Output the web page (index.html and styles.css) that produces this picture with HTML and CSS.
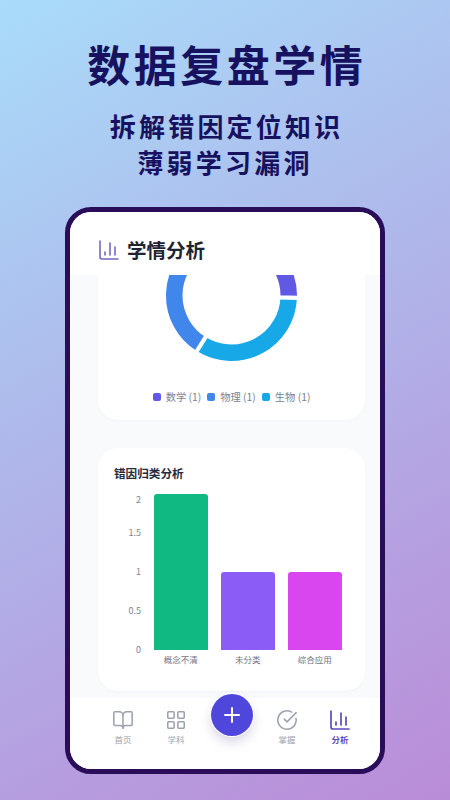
FILE: index.html
```html
<!DOCTYPE html>
<html lang="zh-CN">
<head>
<meta charset="utf-8">
<title>数据复盘学情</title>
<link rel="stylesheet" href="styles.css">
</head>
<body>
<main class="poster">
  <h1 class="headline">数据复盘学情</h1>
  <p class="subline">拆解错因定位知识<br>薄弱学习漏洞</p>
  <section class="phone">
    <header class="app-header">
      <svg class="header-icon" viewBox="0 0 24 24"><path d="M3 3v16a2 2 0 0 0 2 2h16"/><path d="M18 17V9"/><path d="M13 17V5"/><path d="M8 17v-3"/></svg>
      <h2 class="app-title">学情分析</h2>
    </header>
    <div class="content">
      <div class="card card-donut">
        <svg class="donut" viewBox="0 0 267 100">
          <g transform="rotate(2 133.5 20.5)">
            <path class="seg seg-cyan" d="M201 20.5A67.5 67.5 0 0 1 99.75 78.96L110 61.2A47 47 0 0 0 180.5 20.5Z"/>
            <path class="seg seg-blue" d="M99.75 78.96A67.5 67.5 0 0 1 99.75 -37.96L110 -20.2A47 47 0 0 0 110 61.2Z"/>
            <path class="seg seg-purple" d="M99.75 -37.96A67.5 67.5 0 0 1 201 20.5L180.5 20.5A47 47 0 0 0 110 -20.2Z"/>
          </g>
        </svg>
        <ul class="legend">
          <li class="legend-item"><i class="swatch swatch-purple"></i>数学 (1)</li>
          <li class="legend-item"><i class="swatch swatch-blue"></i>物理 (1)</li>
          <li class="legend-item"><i class="swatch swatch-cyan"></i>生物 (1)</li>
        </ul>
      </div>
      <div class="card card-bars">
        <h3 class="card-title">错因归类分析</h3>
        <div class="chart">
          <div class="y-axis">
            <span class="tick tick-first">2</span>
            <span class="tick">1.5</span>
            <span class="tick">1</span>
            <span class="tick">0.5</span>
            <span class="tick">0</span>
          </div>
          <div class="plot">
            <div class="bar-col"><div class="bar bar-green"></div><span class="bar-label">概念不清</span></div>
            <div class="bar-col"><div class="bar bar-violet"></div><span class="bar-label">未分类</span></div>
            <div class="bar-col"><div class="bar bar-magenta"></div><span class="bar-label">综合应用</span></div>
          </div>
        </div>
      </div>
    </div>
    <nav class="tabbar">
      <a class="tab">
        <svg class="tab-icon" viewBox="0 0 24 24"><path d="M12 7v14"/><path d="M3 18a1 1 0 0 1-1-1V4a1 1 0 0 1 1-1h5a4 4 0 0 1 4 4 4 4 0 0 1 4-4h5a1 1 0 0 1 1 1v13a1 1 0 0 1-1 1h-6a3 3 0 0 0-3 3 3 3 0 0 0-3-3z"/></svg>
        <span>首页</span>
      </a>
      <a class="tab">
        <svg class="tab-icon" viewBox="0 0 24 24"><rect x="3" y="3" width="7" height="7" rx="1"/><rect x="14" y="3" width="7" height="7" rx="1"/><rect x="14" y="14" width="7" height="7" rx="1"/><rect x="3" y="14" width="7" height="7" rx="1"/></svg>
        <span>学科</span>
      </a>
      <div class="tab-gap"></div>
      <a class="tab">
        <svg class="tab-icon" viewBox="0 0 24 24"><path d="M21.8 10A10 10 0 1 1 17 3.34"/><path d="m9 11 3 3L22 4"/></svg>
        <span>掌握</span>
      </a>
      <a class="tab tab-active">
        <svg class="tab-icon tab-icon-large" viewBox="0 0 24 24"><path d="M3 3v16a2 2 0 0 0 2 2h16"/><path d="M18 17V9"/><path d="M13 17V5"/><path d="M8 17v-3"/></svg>
        <span>分析</span>
      </a>
      <button class="fab" type="button" aria-label="添加">
        <svg class="fab-icon" viewBox="0 0 24 24"><path d="M5 12h14"/><path d="M12 5v14"/></svg>
      </button>
    </nav>
  </section>
</main>
</body>
</html>
```
FILE: styles.css
```css
* { box-sizing: border-box; }
html, body { margin: 0; padding: 0; }
body { font-family: "Noto Sans CJK SC", "Noto Sans", sans-serif; }

.poster {
  width: 450px;
  height: 800px;
  overflow: hidden;
  padding-top: 33px;
  display: flex;
  flex-direction: column;
  align-items: center;
  background: linear-gradient(150deg, #a9dcfa 0%, #aebcec 38%, #b4a4e2 68%, #ba8cd8 100%);
}
.headline {
  margin: 0;
  font-size: 43px;
  line-height: 60px;
  font-weight: 700;
  letter-spacing: 3.5px;
  text-indent: 3.5px;
  color: #17125f;
}
.subline {
  margin: 15px 0 0;
  font-size: 26px;
  line-height: 36px;
  font-weight: 700;
  letter-spacing: 3.2px;
  text-indent: 3.2px;
  text-align: center;
  color: #17125f;
}
.phone {
  margin-top: 27px;
  width: 320px;
  height: 567px;
  flex: none;
  border: 5px solid #2a0d58;
  border-radius: 26px;
  background: #fff;
  overflow: hidden;
  display: flex;
  flex-direction: column;
}
.app-header {
  height: 63px;
  flex: none;
  padding: 12px 0 0 27px;
  display: flex;
  align-items: center;
  gap: 6px;
  background: #fff;
}
.header-icon {
  width: 24px;
  height: 24px;
  fill: none;
  stroke: #7567c6;
  stroke-width: 1.6;
  stroke-linecap: round;
  stroke-linejoin: round;
}
.app-title {
  margin: 0;
  font-size: 19.5px;
  line-height: 28px;
  font-weight: 700;
  color: #1f2433;
}
.content {
  flex: 1;
  min-height: 0;
  padding: 0 15px 0 28px;
  background: #f8fafc;
  overflow: hidden;
}
.card {
  background: #fff;
  border-radius: 20px;
  box-shadow: 0 1px 3px rgba(30, 40, 80, 0.03);
}
.card-donut {
  height: 145px;
  border-radius: 0 0 20px 20px;
  display: flex;
  flex-direction: column;
  align-items: center;
}
.donut {
  width: 267px;
  height: 100px;
  display: block;
  flex: none;
}
.seg { stroke: #fff; stroke-width: 4; }
.seg-cyan { fill: #17a8e8; }
.seg-blue { fill: #4186ea; }
.seg-purple { fill: #6158e4; }
.legend {
  list-style: none;
  margin: 15px 0 0;
  padding: 0;
  display: flex;
  gap: 6px;
}
.legend-item {
  display: flex;
  align-items: center;
  gap: 5px;
  font-size: 10.3px;
  line-height: 14px;
  color: #7b8294;
}
.swatch { width: 8px; height: 8px; border-radius: 2px; }
.swatch-purple { background: #6158e4; }
.swatch-blue { background: #4186ea; }
.swatch-cyan { background: #17a8e8; }
.card-bars {
  margin-top: 28px;
  height: 243px;
  padding: 16px 16px 0;
}
.card-title {
  margin: 0;
  font-size: 11.6px;
  line-height: 18px;
  font-weight: 700;
  color: #262b3c;
}
.chart {
  margin-top: 12px;
  display: flex;
  align-items: flex-start;
}
.y-axis {
  width: 27px;
  display: flex;
  flex-direction: column;
  flex: none;
  align-items: flex-end;
}
.tick {
  height: 39px;
  font-size: 9px;
  line-height: 12px;
  color: #80858f;
  white-space: nowrap;
}
.tick-first { height: 33px; }
.plot {
  margin-left: 13px;
  display: flex;
  gap: 13.5px;
  height: 171px;
  align-items: flex-end;
}
.bar-col {
  width: 53.5px;
  display: flex;
  flex-direction: column;
  align-items: center;
}
.bar { width: 100%; border-radius: 3px 3px 0 0; }
.bar-green { height: 156px; background: #10b981; }
.bar-violet { height: 78px; background: #8b5cf6; }
.bar-magenta { height: 78px; background: #d946ef; }
.bar-label {
  height: 15px;
  font-size: 8.5px;
  line-height: 18px;
  color: #70757f;
  white-space: nowrap;
}
.tabbar {
  position: relative;
  height: 71px;
  flex: none;
  padding: 10px 13.5px 0 26.5px;
  display: flex;
  align-items: flex-start;
  background: #fff;
}
.tab {
  width: 53px;
  flex: none;
  display: flex;
  flex-direction: column;
  align-items: center;
  font-size: 8.5px;
  line-height: 12px;
  color: #9ca3af;
}
.tab-gap { width: 58px; flex: none; }
.tab-icon {
  width: 22px;
  height: 24px;
  margin-bottom: 1px;
  fill: none;
  stroke: #9ca3af;
  stroke-width: 1.7;
  stroke-linecap: round;
  stroke-linejoin: round;
}
.tab-active { color: #5a4cc0; font-weight: 700; }
.tab-active .tab-icon { stroke: #5a4cc0; }
.tab-icon-large { width: 24px; }
.fab {
  position: absolute;
  left: 141px;
  top: -4px;
  width: 42px;
  height: 42px;
  padding: 0;
  border: 0;
  border-radius: 50%;
  background: #4f46dc;
  box-shadow: 0 0 0 1px #fff, 0 6px 12px rgba(60, 50, 120, 0.2);
  display: flex;
  align-items: center;
  justify-content: center;
}
.fab-icon {
  width: 24px;
  height: 24px;
  fill: none;
  stroke: #fff;
  stroke-width: 2;
  stroke-linecap: round;
}
```
